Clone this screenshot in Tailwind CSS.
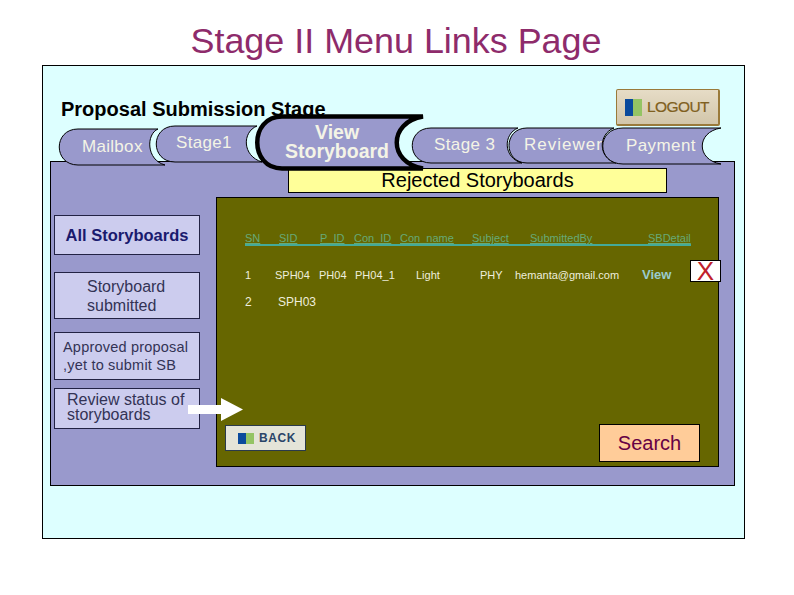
<!DOCTYPE html>
<html lang="en">
<head>
  <meta charset="UTF-8" />
  <title>Stage II Menu Links Page</title>
  <script src="https://cdn.jsdelivr.net/npm/@tailwindcss/browser@4"></script>
</head>
<body class="bg-white font-['Liberation_Sans',Arial,sans-serif] overflow-hidden">
  <div class="relative w-[794px] h-[595px] overflow-hidden">

    <!-- Title -->
    <h1 class="pt-[21px] h-[65px] pr-[2px] text-center text-[35.9px] leading-[40px] text-[#8e2b6b]">Stage II Menu Links Page</h1>

    <!-- Slide -->
    <div class="absolute left-[42px] top-[65px] w-[703px] h-[474px] bg-[#ddffff] border border-black">
      <p class="absolute left-[18px] top-[32px] text-[20px] leading-[23px] font-bold text-black whitespace-nowrap">Proposal Submission Stage</p>

      <!-- Logout -->
      <div class="absolute left-[573px] top-[23px] w-[104px] h-[37px] flex items-center gap-[5px] pl-[8px] rounded-[2px] border border-[#9a7a3a] border-b-2 border-r-2 bg-gradient-to-b from-[#e6dcc6] to-[#d2c6aa]">
        <svg width="17" height="17" viewBox="0 0 17 17"><rect width="8" height="17" fill="#0a4a9c"/><rect x="8" width="9" height="17" fill="#94c464"/></svg>
        <span class="text-[15.5px] leading-none tracking-[-0.6px] text-[#7f6020] [-webkit-text-stroke:0.2px_#7f6020]">LOGOUT</span>
      </div>

      <!-- Main panel -->
      <div class="absolute left-[7px] top-[95px] w-[685px] h-[325px] bg-[#9999cc] border border-black">
        <div class="absolute left-[237px] top-[6px] w-[379px] h-[25px] bg-[#ffff99] border border-black text-center text-[20px] leading-[23px] text-black">Rejected Storyboards</div>

        <!-- Left menu -->
        <div class="absolute left-[3px] top-[53px] w-[146px] flex flex-col">
          <div class="h-[40px] bg-[#ccccee] border border-[#222244] flex items-center justify-center text-[16.5px] font-bold text-[#1a1a6e]">All Storyboards</div>
          <div class="mt-[17px] h-[47px] bg-[#ccccee] border border-[#222244] pl-[32px] pt-[4px] text-[16px] leading-[19px] text-[#333355]">Storyboard<br>submitted</div>
          <div class="mt-[13px] h-[48px] bg-[#ccccee] border border-[#222244] pl-[8px] pt-[5px] text-[14.5px] leading-[18px] tracking-[0.2px] text-[#333355]">Approved proposal<br>,yet to submit SB</div>
          <div class="mt-[8px] h-[41px] bg-[#ccccee] border border-[#222244] pl-[12px] pt-[3px] text-[16px] leading-[15px] text-[#333355]">Review status of<br>storyboards</div>
        </div>

        <!-- Data panel -->
        <div class="absolute left-[165px] top-[35px] w-[503px] h-[270px] bg-[#666600] border border-black">
          <div class="absolute left-[28px] top-[34px] w-[446px] border-b-2 border-[#44aa99] flex text-[11px] leading-[12px] text-[#66aa77] underline">
            <span class="w-[34px]">SN</span><span class="w-[41px]">SID</span><span class="w-[34px]">P_ID</span><span class="w-[46px]">Con_ID</span><span class="w-[72px]">Con_name</span><span class="w-[58px]">Subject</span><span class="w-[118px]">SubmittedBy</span><span>SBDetail</span>
          </div>
          <div class="absolute left-[28px] top-[71px] flex items-center text-[11px] leading-[12px] text-[#eeeedd]">
            <span class="w-[30px]">1</span><span class="w-[44px]">SPH04</span><span class="w-[36px]">PH04</span><span class="w-[61px]">PH04_1</span><span class="w-[64px]">Light</span><span class="w-[35px]">PHY</span><span class="w-[127px]">hemanta@gmail.com</span><span class="text-[13px] font-bold text-[#99cccc]">View</span>
          </div>
          <div class="absolute left-[28px] top-[98px] flex text-[12px] leading-[13px] text-[#eeeedd]">
            <span class="w-[33px]">2</span><span>SPH03</span>
          </div>
          <!-- Back -->
          <div class="absolute left-[8px] top-[227px] w-[81px] h-[26px] flex items-center gap-[5px] pl-[12px] bg-[#e4e4d8] border border-[#2a3a4a]">
            <svg width="16" height="11" viewBox="0 0 16 11"><rect width="8" height="11" fill="#0a4a9c"/><rect x="8" width="8" height="11" fill="#94c464"/></svg>
            <span class="text-[12px] leading-none font-bold tracking-[0.6px] text-[#2a4468]">BACK</span>
          </div>
          <!-- Search -->
          <div class="absolute left-[382px] top-[226px] w-[101px] h-[38px] bg-[#ffcc99] border border-black flex items-center justify-center text-[20px] text-[#660044]">Search</div>
        </div>
      </div>

      <!-- Tabs -->
      <svg class="absolute left-0 top-0" width="703" height="130" viewBox="43 66 703 130" font-family="'Liberation Sans', Arial, sans-serif">
        <g fill="#9999cc" stroke="#000" stroke-width="1">
          <path d="M78 129H158C146 134 146 160 165 165H78C53 165 53 129 78 129Z"/>
          <path d="M175 126H257C242 132 242 156 262 162H175C150 162 150 126 175 126Z"/>
          <path d="M431 128H518C503 134 503 158 522 163H431C406 163 406 128 431 128Z"/>
          <path d="M527 128H614C598 134 598 158 616 163H527C503 163 503 128 527 128Z"/>
        </g>
        <path d="M282 116.5H423C388 122 388 163 423 168.5H282C249 168.5 249 116.5 282 116.5Z" fill="#9999cc" stroke="#000" stroke-width="4.5" stroke-linecap="round"/>
        <g fill="#f4f4e6" font-size="17">
          <text x="82" y="152" letter-spacing="0.3">Mailbox</text>
          <text x="176" y="148" letter-spacing="0.3">Stage1</text>
          <text x="315" y="139" font-size="19.5" font-weight="700">View</text>
          <text x="285" y="157.5" font-size="19.5" font-weight="700">Storyboard</text>
          <text x="434" y="150" letter-spacing="0.4">Stage 3</text>
          <text x="524" y="150" letter-spacing="1">Reviewer</text>
        </g>
        <!-- Payment sits on top and clips the end of Reviewer -->
        <path d="M623 128H721C696 132 696 160 721 164H623C596 164 596 128 623 128Z" fill="#9999cc" stroke="#000" stroke-width="1"/>
        <text x="626" y="151" fill="#f4f4e6" font-size="17" letter-spacing="0.4">Payment</text>
      </svg>

      <!-- Arrow -->
      <svg class="absolute left-[145px] top-[332px]" width="56" height="24" viewBox="0 0 56 24"><path d="M0 7H33V0L55 11.5L33 23V16H0Z" fill="#fff"/></svg>

      <!-- Delete -->
      <div class="absolute left-[647px] top-[194px] w-[31px] h-[22px] bg-white border border-black flex items-center justify-center text-[26px] leading-none text-[#c0202c]">X</div>
    </div>
  </div>
</body>
</html>
